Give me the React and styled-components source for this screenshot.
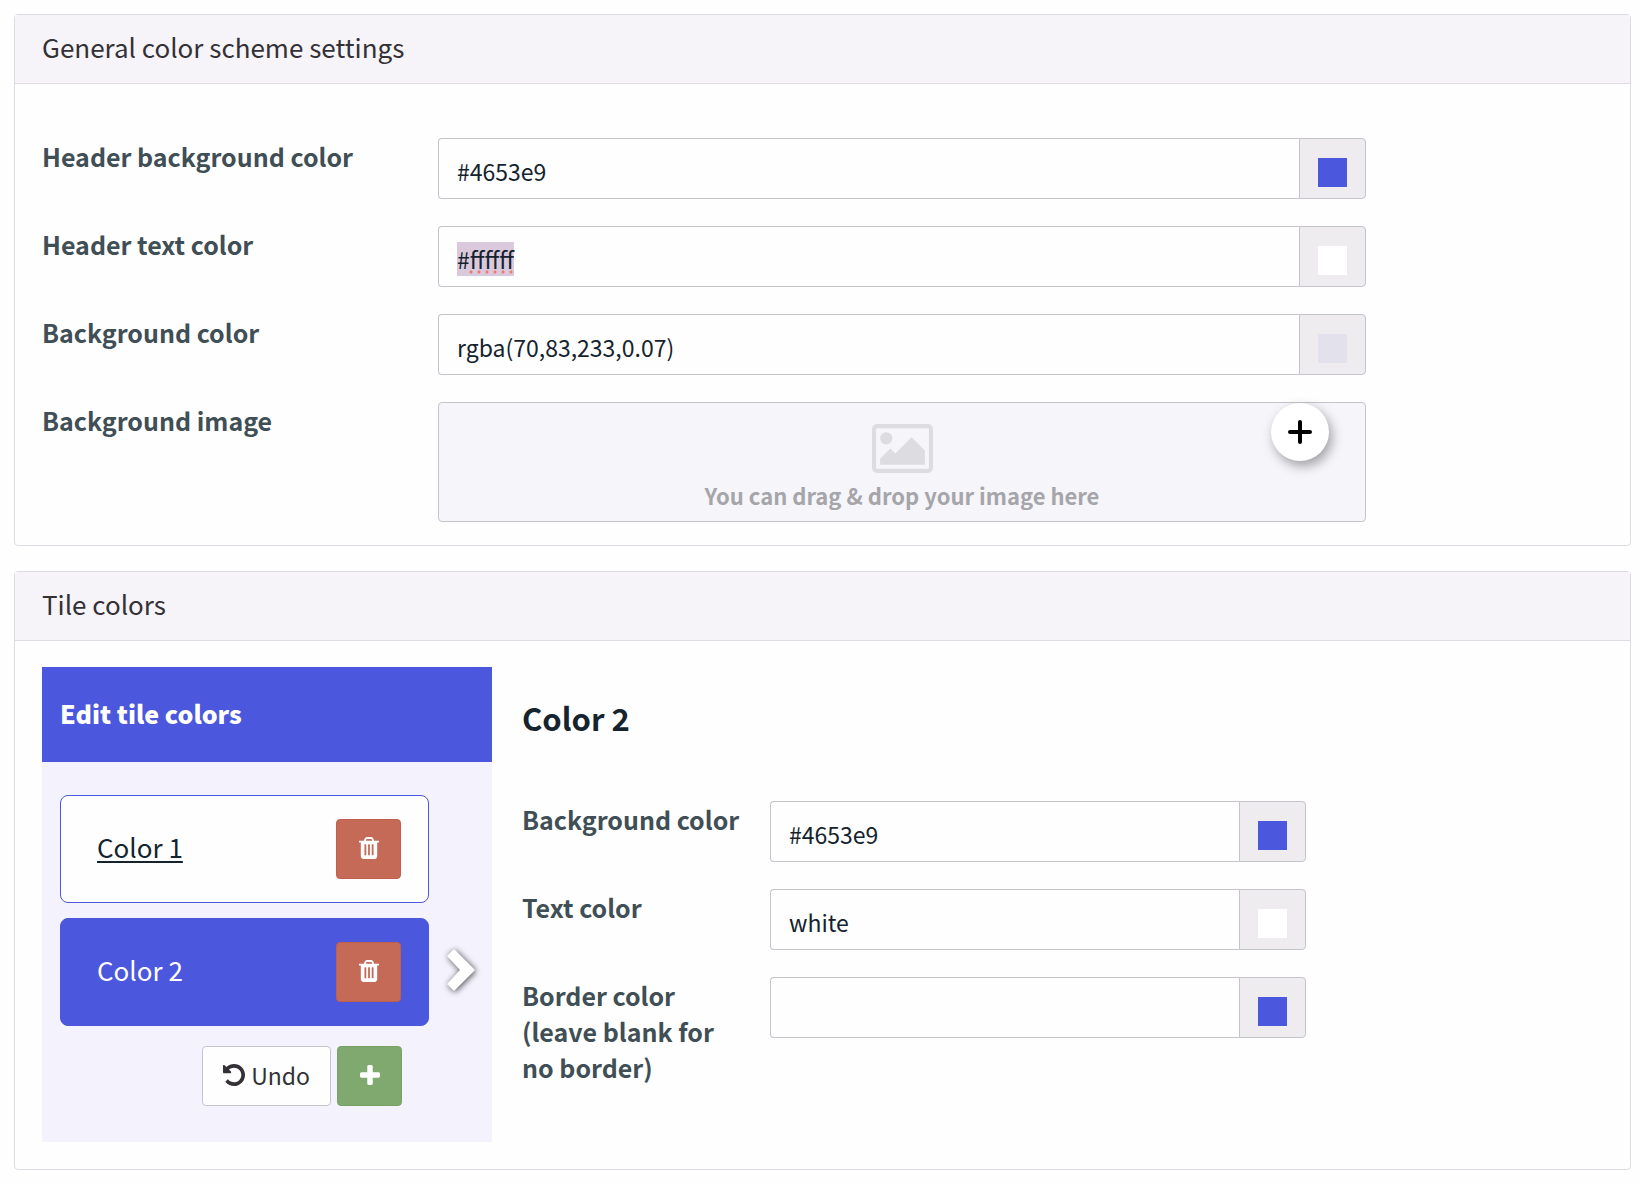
import React, { useEffect, useRef, useState } from "react";
import styled, { createGlobalStyle } from "styled-components";

const GlobalStyle = createGlobalStyle`
  *, *::before, *::after {
    box-sizing: border-box;
  }

  body {
    margin: 0;
    background-color: #fefefe;
    color: #14232d;
    font-family: "Noto Sans CJK SC", "Source Sans Pro", sans-serif;
    font-size: 26px;
    line-height: 36px;
  }

  button, input {
    font-family: inherit;
  }
`;

const Page = styled.main`
  display: flex;
  flex-direction: column;
  gap: 25px;
  padding: 14px 9px 14px 14px;
`;

const Panel = styled.section`
  border: 1px solid #dedce2;
  border-radius: 4px;
`;

const PanelTitle = styled.h2`
  margin: 0;
  padding: 14px 27px 18px;
  border-bottom: 1px solid #dedce2;
  background-color: #f6f4f8;
  color: #333136;
  font-size: 26px;
  font-weight: 400;
  line-height: 36px;
`;

const FormBody = styled.form`
  display: flex;
  flex-direction: column;
  gap: 27px;
  padding: 54px 27px 23px;
`;

const TileBody = styled.div`
  display: flex;
  gap: 30px;
  padding: 26px 27px 27px;
`;

const Row = styled.div`
  display: grid;
  grid-template-columns: ${(props) => (props.$narrow ? "248px minmax(0, 536px)" : "396px minmax(0, 928px)")};
`;

const Label = styled.label`
  padding-right: 20px;
  color: #404e55;
  font-size: 25px;
  font-weight: 700;
`;

const InputGroup = styled.div`
  position: relative;
  display: flex;
  height: 61px;
`;

const TextInput = styled.input`
  flex: 1;
  min-width: 0;
  padding: 5px 18px 0;
  border: 1px solid #c6c4cb;
  border-right: none;
  border-radius: 4px 0 0 4px;
  background-color: #fefefe;
  color: #14232d;
  font-size: 23px;
  outline: none;

  &::selection {
    background-color: #dac9dc;
    color: #14232d;
  }
`;

const SpellMark = styled.span`
  position: absolute;
  left: 29px;
  bottom: 13px;
  width: 48px;
  height: 4px;
  background-image: radial-gradient(circle, #ee7a6c 1px, transparent 2px);
  background-size: 8px 4px;
`;

const SwatchButton = styled.button`
  width: 67px;
  padding: 7px 0 0;
  display: flex;
  align-items: center;
  justify-content: center;
  border: 1px solid #c6c4cb;
  border-radius: 0 4px 4px 0;
  background-color: #eeecef;
  cursor: pointer;
`;

const Swatch = styled.span`
  width: 29px;
  height: 29px;
  background-color: ${(props) => props.$color};
`;

const DropZone = styled.div`
  position: relative;
  display: flex;
  flex-direction: column;
  align-items: center;
  height: 120px;
  padding-top: 17px;
  border: 1px solid #c6c4cb;
  border-radius: 4px;
  background-color: #f5f5fa;
  color: #a5a5aa;
  font-size: 22px;
  font-weight: 700;
  line-height: 36px;
`;

const AddImageButton = styled.button`
  position: absolute;
  top: 0;
  right: 36px;
  display: flex;
  align-items: center;
  justify-content: center;
  width: 58px;
  height: 58px;
  padding: 0;
  border: none;
  border-radius: 50%;
  background-color: #ffffff;
  box-shadow: 3px 5px 12px rgba(0, 0, 0, 0.35);
  cursor: pointer;
`;

const Sidebar = styled.aside`
  flex: 0 0 450px;
  background-color: #f3f2fd;
`;

const SidebarTitle = styled.h3`
  margin: 0;
  padding: 28px 18px 31px;
  background-color: #4b57dc;
  color: #ffffff;
  font-size: 25px;
  font-weight: 900;
  line-height: 36px;
`;

const TileList = styled.ul`
  display: flex;
  flex-direction: column;
  gap: 15px;
  margin: 0;
  padding: 33px 16px 0 18px;
  list-style: none;
`;

const TileItem = styled.li`
  display: flex;
  align-items: center;
  gap: 18px;
`;

const Tile = styled.div`
  display: flex;
  align-items: center;
  justify-content: space-between;
  width: 369px;
  height: 108px;
  padding: 0 27px 0 36px;
  border: 1px solid #4b57dc;
  border-radius: 8px;
  background-color: ${(props) => (props.$active ? "#4b57dc" : "#fefefe")};
`;

const TileLink = styled.a`
  padding-bottom: 4px;
  color: ${(props) => (props.$active ? "#ffffff" : "#14232d")};
  text-decoration: ${(props) => (props.$active ? "none" : "underline")};
  text-decoration-thickness: 2px;
  text-underline-offset: 3px;
`;

const Button = styled.button`
  display: flex;
  align-items: center;
  justify-content: center;
  gap: 6px;
  min-width: 65px;
  height: 60px;
  padding: 0 20px 2px;
  border: 1px solid ${(props) => props.$border};
  border-radius: 4px;
  background-color: ${(props) => props.$bg};
  color: ${(props) => props.$color || "#ffffff"};
  font-size: 23px;
  line-height: 36px;
  cursor: pointer;
`;

const Actions = styled.div`
  display: flex;
  justify-content: flex-end;
  gap: 6px;
  padding: 20px 90px 36px 18px;
`;

const Editor = styled.form`
  flex: 1;
  display: flex;
  flex-direction: column;
  gap: 27px;
  min-width: 0;
`;

const EditorTitle = styled.h3`
  margin: 0;
  padding: 31px 0 36px;
  font-size: 31px;
  font-weight: 700;
  line-height: 40px;
`;

const Chevron = styled.svg`
  overflow: visible;
  filter: drop-shadow(1px 1px 3px rgba(0, 0, 0, 0.7));
`;

const TrashIcon = () => (
  <svg width="20" height="26" viewBox="0 0 1408 1792" fill="currentColor" aria-hidden="true">
    <path d="M512 1376v-704q0-14-9-23t-23-9h-64q-14 0-23 9t-9 23v704q0 14 9 23t23 9h64q14 0 23-9t9-23zM768 1376v-704q0-14-9-23t-23-9h-64q-14 0-23 9t-9 23v704q0 14 9 23t23 9h64q14 0 23-9t9-23zM1024 1376v-704q0-14-9-23t-23-9h-64q-14 0-23 9t-9 23v704q0 14 9 23t23 9h64q14 0 23-9t9-23zM480 384h448l-48-117q-7-9-17-11h-317q-10 2-17 11zM1408 416v64q0 14-9 23t-23 9h-96v948q0 83-47 143.500t-113 60.500h-832q-66 0-113-58.500t-47-141.500v-952h-96q-14 0-23-9t-9-23v-64q0-14 9-23t23-9h309l70-167q15-37 54-63t79-26h320q40 0 79 26t54 63l70 167h309q14 0 23 9t9 23z" />
  </svg>
);

const UndoIcon = () => (
  <svg width="22" height="26" viewBox="0 0 1536 1792" fill="currentColor" aria-hidden="true">
    <path d="M1536 896q0 156-61 298t-164 245-245 164-298 61q-172 0-327-72.500t-264-204.500q-7-10-6.500-22.500t8.500-20.500l137-138q10-9 25-9 16 2 23 12 73 95 179 147t225 52q104 0 198.500-40.500t163.500-109.500 109.500-163.500 40.500-198.500-40.500-198.500-109.500-163.500-163.500-109.500-198.500-40.500q-98 0-188 35.500t-160 101.500l137 138q31 30 14 69-17 40-59 40h-448q-26 0-45-19t-19-45v-448q0-42 40-59 39-17 69 14l130 129q107-101 244.500-156.500t284.500-55.500q156 0 298 61t245 164 164 245 61 298z" />
  </svg>
);

const PlusIcon = () => (
  <svg width="20" height="26" viewBox="0 0 1408 1792" fill="currentColor" aria-hidden="true">
    <path d="M1408 800v192q0 40-28 68t-68 28h-416v416q0 40-28 68t-68 28h-192q-40 0-68-28t-28-68v-416h-416q-40 0-68-28t-28-68v-192q0-40 28-68t68-28h416v-416q0-40 28-68t68-28h192q40 0 68 28t28 68v416h416q40 0 68 28t28 68z" />
  </svg>
);

const PictureIcon = () => (
  <svg width="61" height="57" viewBox="0 0 1920 1792" fill="#dddce1" aria-hidden="true">
    <path d="M640 576q0 80-56 136t-136 56-136-56-56-136 56-136 136-56 136 56 56 136zM1664 960v448h-1408v-192l320-320 160 160 512-512zM1760 256h-1600q-13 0-22.500 9.500t-9.500 22.500v1216q0 13 9.500 22.500t22.500 9.500h1600q13 0 22.500-9.500t9.500-22.500v-1216q0-13-9.500-22.500t-22.500-9.500zM1920 288v1216q0 66-47 113t-113 47h-1600q-66 0-113-47t-47-113v-1216q0-66 47-113t113-47h1600q66 0 113 47t47 113z" />
  </svg>
);

const ColorField = ({ id, label, initial, swatch, narrow, selected }) => {
  const [value, setValue] = useState(initial);
  const inputRef = useRef(null);

  useEffect(() => {
    if (selected) {
      inputRef.current.focus();
      inputRef.current.select();
    }
  }, [selected]);

  return (
    <Row $narrow={narrow}>
      <Label htmlFor={id}>{label}</Label>
      <InputGroup>
        <TextInput
          id={id}
          ref={inputRef}
          type="text"
          value={value}
          onChange={(e) => setValue(e.target.value)}
          spellCheck={false}
          autoComplete="off"
        />
        {selected && <SpellMark />}
        <SwatchButton type="button" aria-label={`Pick ${label}`}>
          <Swatch $color={swatch} />
        </SwatchButton>
      </InputGroup>
    </Row>
  );
};

const tiles = ["Color 1", "Color 2"];

const App = () => {
  const [active, setActive] = useState("Color 2");

  return (
    <Page>
      <GlobalStyle />
      <Panel>
        <PanelTitle>General color scheme settings</PanelTitle>
        <FormBody>
          <ColorField id="header-bg" label="Header background color" initial="#4653e9" swatch="#4b57dc" />
          <ColorField id="header-text" label="Header text color" initial="#ffffff" swatch="#ffffff" selected />
          <ColorField id="page-bg" label="Background color" initial="rgba(70,83,233,0.07)" swatch="#e2e1ec" />
          <Row>
            <Label htmlFor="bg-image">Background image</Label>
            <DropZone>
              <PictureIcon />
              You can drag &amp; drop your image here
              <AddImageButton id="bg-image" type="button" aria-label="Add image">
                <svg width="28" height="28" viewBox="0 0 28 28" stroke="#000000" strokeWidth="4" strokeLinecap="round">
                  <path d="M14 4v20M4 14h20" />
                </svg>
              </AddImageButton>
            </DropZone>
          </Row>
        </FormBody>
      </Panel>

      <Panel>
        <PanelTitle>Tile colors</PanelTitle>
        <TileBody>
          <Sidebar>
            <SidebarTitle>Edit tile colors</SidebarTitle>
            <TileList>
              {tiles.map((name) => (
                <TileItem key={name}>
                  <Tile $active={name === active}>
                    <TileLink href="#" $active={name === active} onClick={() => setActive(name)}>
                      {name}
                    </TileLink>
                    <Button type="button" $bg="#c46a57" $border="#c0604c" aria-label={`Delete ${name}`}>
                      <TrashIcon />
                    </Button>
                  </Tile>
                  {name === active && (
                    <Chevron
                      width="28"
                      height="48"
                      viewBox="0 0 28 48"
                      fill="#ffffff"
                      stroke="#ffffff"
                      strokeWidth="3"
                      strokeLinejoin="round"
                      aria-hidden="true"
                    >
                      <path d="M7 3L26 22L7 41L2 36L15 22L2 8Z" />
                    </Chevron>
                  )}
                </TileItem>
              ))}
            </TileList>
            <Actions>
              <Button type="button" $bg="#fefefe" $border="#c6c4cb" $color="#333136">
                <UndoIcon />
                Undo
              </Button>
              <Button type="button" $bg="#80a96f" $border="#76a364" aria-label="Add color">
                <PlusIcon />
              </Button>
            </Actions>
          </Sidebar>
          <Editor>
            <EditorTitle>{active}</EditorTitle>
            <ColorField narrow id="tile-bg" label="Background color" initial="#4653e9" swatch="#4b57dc" />
            <ColorField narrow id="tile-text" label="Text color" initial="white" swatch="#ffffff" />
            <ColorField narrow id="tile-border" label="Border color (leave blank for no border)" initial="" swatch="#4b57dc" />
          </Editor>
        </TileBody>
      </Panel>
    </Page>
  );
};

export default App;
